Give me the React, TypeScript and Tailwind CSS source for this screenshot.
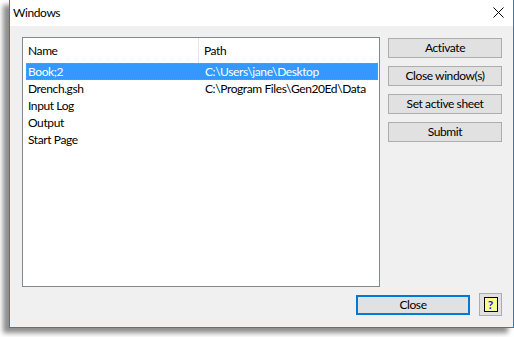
import React from "react";

const rows = [
  { name: "Book;2", path: "C:\\Users\\jane\\Desktop", selected: true },
  { name: "Drench.gsh", path: "C:\\Program Files\\Gen20Ed\\Data" },
  { name: "Input Log", path: "" },
  { name: "Output", path: "" },
  { name: "Start Page", path: "" },
];

function Btn({ label }: { label: string }) {
  return (
    <div className="h-[20px] w-[114px] border border-[#adadad] bg-[#e1e1e1] flex items-center justify-center text-black leading-none whitespace-nowrap">
      {label}
    </div>
  );
}

export default function App() {
  return (
    <div
      className="w-[514px] h-[337px] bg-white overflow-hidden relative text-[12px] tracking-[-0.4px] text-black"
      style={{ fontFamily: 'Lato, "Noto Sans", sans-serif' }}
    >
      <div className="ml-[9px] w-[505px] h-[328px] border border-t-0 border-[#1883d7] bg-[#f0f0f0] flex flex-col shadow-[-6px_5px_5px_rgba(0,0,0,0.45)]">
        <div className="h-[26px] bg-white flex items-center justify-between pl-[3px] pr-[9px]">
          <span className="text-[12px] leading-none">Windows</span>
          <svg width="11" height="11" viewBox="0 0 11 11" className="-mt-[1px]">
            <path d="M0.5 0.5 L10.5 10.5 M10.5 0.5 L0.5 10.5" stroke="#000" strokeWidth="1" />
          </svg>
        </div>
        <div className="flex flex-col pt-[11px] pl-[12px] pr-[10px]">
          <div className="flex gap-[8px]">
            <div className="w-[358px] h-[250px] border border-[#828790] bg-white flex flex-col">
              <div className="h-[25px] flex items-center whitespace-nowrap">
                <div className="w-[176px] h-full flex items-center pl-[5px] border-r border-[#e5e5e5]">Name</div>
                <div className="pl-[5px]">Path</div>
              </div>
              <div className="flex flex-col pl-[3px] pr-[1px]">
                {rows.map((r) => (
                  <div
                    key={r.name}
                    className={
                      "h-[17px] flex items-center whitespace-nowrap " +
                      (r.selected
                        ? "bg-[#3399ff] text-white outline outline-1 outline-dotted outline-[#c88a3c] -outline-offset-1"
                        : "")
                    }
                  >
                    <div className="w-[176px] shrink-0 pl-[2px] leading-none">{r.name}</div>
                    <div className="pl-[3px] leading-none">{r.path}</div>
                  </div>
                ))}
              </div>
            </div>
            <div className="flex flex-col gap-[8px] pt-[1px]">
              <Btn label="Activate" />
              <Btn label="Close window(s)" />
              <Btn label="Set active sheet" />
              <Btn label="Submit" />
            </div>
          </div>
          <div className="flex justify-end items-center mt-[6px] gap-[9px] pr-[1px]">
            <div className="h-[20px] w-[114px] border-2 border-[#0078d7] bg-[#e1e1e1] flex items-center justify-center leading-none">
              Close
            </div>
            <div className="h-[23px] w-[23px] border border-[#adadad] bg-[#e1e1e1] flex items-center justify-center">
              <div className="w-[14px] h-[15px] border border-black bg-[#ffff90] flex items-center justify-center text-[#1010ff] font-bold text-[12px] leading-none tracking-normal">
                ?
              </div>
            </div>
          </div>
        </div>
      </div>
    </div>
  );
}
